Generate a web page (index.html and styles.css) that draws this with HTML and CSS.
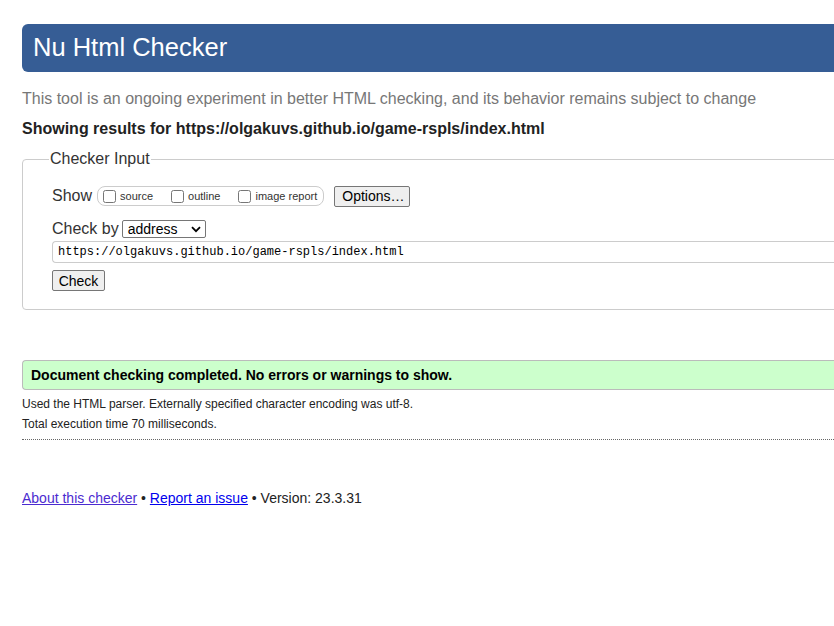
FILE: index.html
```html
<!DOCTYPE html>
<html lang="en">
<head>
<meta charset="utf-8">
<title>Nu Html Checker</title>
<link rel="stylesheet" href="styles.css">
</head>
<body>
<div class="page">
  <h1 class="title">Nu Html Checker</h1>
  <p class="intro">This tool is an ongoing experiment in better HTML checking, and its behavior remains subject to change</p>
  <p class="showing">Showing results for https://olgakuvs.github.io/game-rspls/index.html</p>
  <fieldset class="input">
    <legend class="legend">Checker Input</legend>
    <div class="row show-row">
      <span class="lbl">Show</span>
      <span class="opts">
        <label class="opt"><input type="checkbox" class="cb"><span>source</span></label>
        <label class="opt"><input type="checkbox" class="cb"><span>outline</span></label>
        <label class="opt"><input type="checkbox" class="cb"><span>image report</span></label>
      </span>
      <button class="btn options">Options…</button>
    </div>
    <div class="row by-row">
      <span class="lbl">Check by</span>
      <span class="select">address<svg class="chev" width="10" height="7" viewBox="0 0 10 7"><path d="M1 1.2 L5 5.2 L9 1.2" fill="none" stroke="#000" stroke-width="1.8"/></svg></span>
    </div>
    <div class="url">https://olgakuvs.github.io/game-rspls/index.html</div>
    <div class="row check-row">
      <button class="btn check">Check</button>
    </div>
  </fieldset>
  <div class="success">Document checking completed. No errors or warnings to show.</div>
  <p class="details">Used the HTML parser. Externally specified character encoding was utf-8.</p>
  <p class="details">Total execution time 70 milliseconds.</p>
  <hr class="dotted">
  <p class="footer"><a href="#" class="link visited">About this checker</a> • <a href="#" class="link">Report an issue</a> • Version: 23.3.31</p>
</div>
</body>
</html>
```

FILE: styles.css
```css
html {
  overflow: hidden;
}
body {
  margin: 0;
  background: #fff;
  font-family: "Liberation Sans", Arial, sans-serif;
  color: #222;
}
.page {
  width: 1000px;
  padding: 24px 0 0 22px;
}
.title {
  margin: 0;
  height: 48px;
  line-height: 47px;
  padding-left: 11px;
  background: #365d95;
  color: #fff;
  font-size: 25.5px;
  font-weight: normal;
  border-radius: 6px 0 0 6px;
}
.intro {
  margin: 18px 0 0;
  font-size: 16px;
  line-height: 18px;
  color: #777;
}
.showing {
  margin: 12px 0 0;
  font-size: 16px;
  line-height: 18px;
  font-weight: bold;
  color: #222;
}
.input {
  margin: 12px 0 0;
  padding: 17px 0 18px 29px;
  border: 1px solid #ccc;
  border-radius: 4px;
  min-width: 0;
}
.legend {
  margin-left: -3px;
  padding: 0 1px;
  font-size: 16px;
  color: #333;
}
.row {
  display: flex;
  align-items: center;
}
.lbl {
  font-size: 16px;
  color: #333;
}
.show-row {
  height: 22px;
}
.opts {
  display: flex;
  align-items: center;
  height: 18px;
  margin-left: 5px;
  padding: 0 6px 0 5px;
  border: 1px solid #ccc;
  border-radius: 8px;
  gap: 18px;
}
.opt {
  display: flex;
  align-items: center;
  font-size: 11px;
  color: #333;
}
.cb {
  margin: 0 4px 0 0;
  width: 13px;
  height: 13px;
}
.btn {
  font-family: "Liberation Sans", Arial, sans-serif;
  font-size: 14px;
  color: #000;
  background: #efefef;
  border: 1px solid #767676;
  border-radius: 2px;
  padding: 0 7px;
}
.options {
  margin-left: 10px;
  height: 21px;
  width: 76px;
}
.by-row {
  margin-top: 12px;
  height: 20px;
}
.select {
  display: flex;
  align-items: center;
  justify-content: space-between;
  margin-left: 3px;
  width: 84px;
  height: 18px;
  padding: 0 4px 0 5px;
  box-sizing: border-box;
  border: 1px solid #767676;
  border-radius: 2px;
  font-size: 14px;
  color: #000;
}
.chev {
  display: block;
}
.url {
  margin-top: 2px;
  height: 22px;
  box-sizing: border-box;
  line-height: 20px;
  padding-left: 5px;
  border: 1px solid #ccc;
  border-right: none;
  border-radius: 4px 0 0 4px;
  font-family: "Liberation Mono", "Courier New", monospace;
  font-size: 12px;
  color: #000;
}
.check-row {
  margin-top: 7px;
}
.check {
  height: 21px;
  width: 53px;
  padding: 0;
}
.success {
  margin-top: 50px;
  height: 30px;
  box-sizing: border-box;
  line-height: 28px;
  padding-left: 8px;
  background: #ccffcc;
  border: 1px solid #bbb;
  border-right: none;
  border-radius: 4px 0 0 4px;
  font-size: 14px;
  font-weight: bold;
  color: #000;
}
.details {
  margin: 7px 0 0;
  font-size: 12px;
  line-height: 14px;
  color: #222;
}
.details + .details {
  margin-top: 6px;
}
.dotted {
  margin: 8px 0 0;
  border: none;
  border-top: 1px dotted #666;
  height: 0;
}
.footer {
  margin: 50px 0 0;
  font-size: 14px;
  line-height: 16px;
  color: #222;
}
.link {
  color: #0000ee;
}
.link.visited {
  color: #4b2bd0;
}
```
